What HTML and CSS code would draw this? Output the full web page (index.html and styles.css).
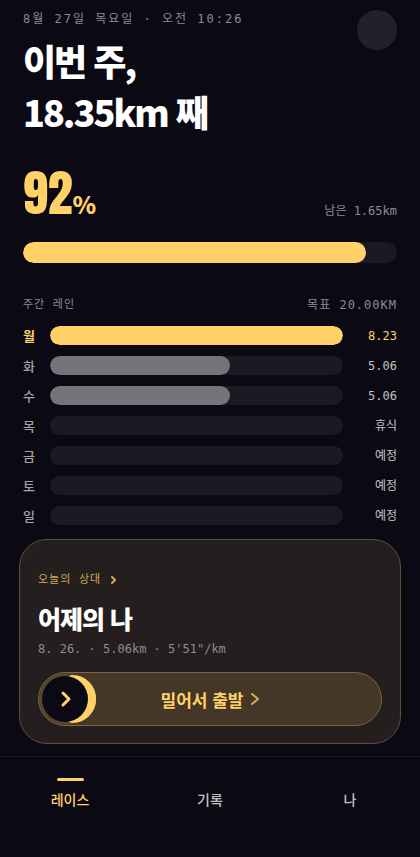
FILE: index.html
```
<!DOCTYPE html>
<html lang="ko">
<head>
    <meta charset="UTF-8">
    <meta name="viewport" content="width=device-width, initial-scale=1.0">
    <title>레이스</title>
    <link rel="stylesheet" href="styles.css">
</head>
<body>
    <main class="page">
        <header class="header">
            <div>
                <p class="date">8월 27일 목요일 · 오전 10:26</p>
                <h1>이번 주,<br>18.35km 째</h1>
            </div>
            <div class="moon"></div>
        </header>

        <!-- Weekly progress -->
        <section class="progress">
            <div class="progress-head">
                <div class="percent">92<span class="unit">%</span></div>
                <p class="remain">남은 1.65km</p>
            </div>
            <div class="track track-big"><div class="fill" style="width: 91.75%"></div></div>
        </section>

        <!-- Weekly lanes -->
        <section class="lanes">
            <div class="lanes-head">
                <h2>주간 레인</h2>
                <p>목표 20.00KM</p>
            </div>
            <ul class="lane-list">
                <li class="lane best"><span class="day">월</span><div class="track"><div class="fill" style="width: 100%"></div></div><span class="value">8.23</span></li>
                <li class="lane"><span class="day">화</span><div class="track"><div class="fill" style="width: 61.5%"></div></div><span class="value">5.06</span></li>
                <li class="lane"><span class="day">수</span><div class="track"><div class="fill" style="width: 61.5%"></div></div><span class="value">5.06</span></li>
                <li class="lane"><span class="day">목</span><div class="track"></div><span class="value">휴식</span></li>
                <li class="lane"><span class="day">금</span><div class="track"></div><span class="value">예정</span></li>
                <li class="lane"><span class="day">토</span><div class="track"></div><span class="value">예정</span></li>
                <li class="lane"><span class="day">일</span><div class="track"></div><span class="value">예정</span></li>
            </ul>
        </section>

        <!-- Today's rival -->
        <section class="rival">
            <a href="#" class="rival-link">오늘의 상대
                <svg class="chevron" width="6" height="10" viewBox="0 0 6 10"><path d="M1 2l3 3-3 3"/></svg>
            </a>
            <h2 class="rival-name">어제의 나</h2>
            <p class="rival-info">8. 26. · 5.06km · 5'51"/km</p>
            <button type="button" class="start">
                <svg class="thumb" width="57" height="52" viewBox="0 0 57 52">
                    <circle cx="33" cy="26" r="24" fill="#ffd166"/>
                    <circle cx="26" cy="26" r="26" fill="#54452f"/>
                    <path d="M33 2a24 24 0 0 1 0 48l-3-1V3z" fill="#ffd166"/>
                    <circle cx="26" cy="26" r="23" fill="#0b0a14"/>
                    <path d="M24 20l6 6-6 6" class="arrow"/>
                </svg>
                <span class="start-label">밀어서 출발
                    <svg class="chevron" width="8" height="12" viewBox="0 0 8 12"><path d="M1 1l6 5-6 5"/></svg>
                </span>
            </button>
        </section>
    </main>

    <nav class="tabs">
        <a href="#" class="tab active">레이스</a>
        <a href="#" class="tab">기록</a>
        <a href="#" class="tab">나</a>
    </nav>
</body>
</html>
```
FILE: styles.css
```
* {
    margin: 0;
    padding: 0;
    box-sizing: border-box;
}

body {
    font-family: "Noto Sans CJK KR", sans-serif;
    background-color: #0b0a14;
    color: #ffffff;
    min-height: 100vh;
    display: flex;
    flex-direction: column;
}

a {
    color: inherit;
    text-decoration: none;
}

.page {
    flex: 1;
    padding: 10px 19px 12px;
}

.header, .progress, .lanes {
    padding: 0 4px;
}

.header {
    display: flex;
    justify-content: space-between;
    align-items: flex-start;
}

.date, .remain, .value, .rival-info, .lanes-head, .rival-link {
    font-family: "DejaVu Sans Mono", "Noto Sans CJK KR", monospace;
    font-size: 12px;
    line-height: 18px;
    color: #8d8c93;
}

.date {
    letter-spacing: 2px;
}

h1 {
    font-size: 36px;
    font-weight: 900;
    line-height: 51px;
    letter-spacing: -2px;
    margin-top: 7px;
}

.moon {
    width: 40px;
    height: 40px;
    border-radius: 50%;
    background-color: #22212a;
}

.progress {
    margin-top: 31px;
}

.progress-head {
    display: flex;
    justify-content: space-between;
    align-items: flex-end;
}

.percent {
    font-family: Anton, "Roboto Condensed", Roboto, sans-serif;
    font-size: 50px;
    line-height: 50px;
    padding-bottom: 2px;
    color: #ffd166;
}

.unit {
    font-family: "Noto Sans CJK KR", sans-serif;
    font-size: 24px;
    font-weight: 900;
    line-height: 24px;
}

.track {
    height: 19px;
    border-radius: 11px;
    background-color: #1b1a23;
    overflow: hidden;
}

.fill {
    height: 100%;
    border-radius: 11px;
    background-color: #757479;
}

.track-big {
    height: 21px;
    margin-top: 22px;
}

.track-big .fill, .best .fill {
    background-color: #ffd166;
}

.lanes {
    margin-top: 33px;
}

.lanes-head {
    display: flex;
    justify-content: space-between;
    letter-spacing: 1px;
}

.lanes-head h2 {
    font-size: 11px;
    font-weight: normal;
}

.lane-list {
    list-style: none;
    display: grid;
    gap: 11px;
    margin-top: 12px;
}

.lane {
    display: grid;
    grid-template-columns: 27px 1fr 54px;
    align-items: center;
    height: 19px;
}

.day {
    font-size: 13px;
    font-weight: 500;
    line-height: 19px;
    color: #a4a3a9;
}

.value {
    color: #c2c1c6;
    text-align: right;
}

.best .day, .best .value {
    color: #ffd166;
}

.best .day {
    font-weight: bold;
}

.rival {
    margin-top: 14px;
    padding: 31px 18px 17px;
    background-color: #241f1e;
    border: 1px solid #5d5039;
    border-radius: 28px;
}

.rival-link {
    display: flex;
    align-items: center;
    gap: 10px;
    font-size: 11px;
    letter-spacing: 1px;
    color: #cfab58;
}

.chevron, .arrow {
    fill: none;
    stroke: #cfab58;
    stroke-width: 2;
    stroke-linecap: round;
    stroke-linejoin: round;
}

.rival-name {
    font-size: 25px;
    font-weight: 900;
    line-height: 34px;
    letter-spacing: -1px;
    margin-top: 12px;
}

.rival-info {
    margin-top: 5px;
}

.start {
    display: grid;
    grid-template-columns: 57px 1fr 57px;
    align-items: center;
    width: 100%;
    height: 54px;
    margin-top: 14px;
    font-family: inherit;
    color: #ffd166;
    background-color: #443727;
    border: 1px solid #7c683f;
    border-radius: 27px;
    cursor: pointer;
}

.arrow {
    stroke: #ffd166;
    stroke-width: 3;
}

.start-label {
    display: flex;
    align-items: center;
    justify-content: center;
    gap: 8px;
    font-size: 17px;
    font-weight: bold;
}

.tabs {
    display: grid;
    grid-template-columns: repeat(3, 1fr);
    padding: 21px 0 48px;
    border-top: 1px solid #1b1a23;
}

.tab {
    display: flex;
    flex-direction: column;
    align-items: center;
    gap: 8px;
    font-size: 14px;
    line-height: 20px;
    font-weight: 500;
    color: #c2c1c6;
}

.tab::before {
    content: "";
    width: 27px;
    height: 3px;
    border-radius: 2px;
}

.active {
    color: #ffd166;
}

.active::before {
    background-color: #ffd166;
}
```
